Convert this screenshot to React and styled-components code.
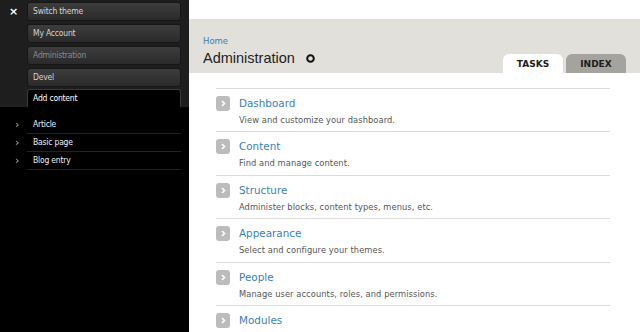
import React from 'react';
import styled, { createGlobalStyle } from 'styled-components';

const GlobalStyle = createGlobalStyle`
    html, body {
        margin: 0;
        padding: 0;
        background: #fff;
        overflow: hidden;
    }
`;

const Page = styled.div`
    display: flex;
    width: 640px;
    height: 332px;
    overflow: hidden;
`;

const Sidebar = styled.aside`
    width: 189px;
    flex-shrink: 0;
    background: #000;
    display: flex;
    flex-direction: column;
    font-family: 'DejaVu Sans Condensed', 'DejaVu Sans', sans-serif;
    font-size: 8.5px;
    letter-spacing: -0.2px;
`;

const SidebarTop = styled.div`
    background: #1e1e1e;
    display: grid;
    grid-template-columns: 27px 154px;
    padding-top: 2px;
`;

const CloseCell = styled.div`
    display: flex;
    justify-content: center;
    padding-top: 3px;
    color: #fff;
    font-family: 'DejaVu Sans', sans-serif;
    font-size: 11px;
    font-weight: bold;
    line-height: 13px;
`;

const ButtonStack = styled.div`
    display: flex;
    flex-direction: column;
    gap: 3px;
`;

const MenuButton = styled.div`
    height: 19px;
    box-sizing: border-box;
    border: 1px solid #161616;
    border-radius: 3px;
    background: linear-gradient(#3d3d3d, #2a2a2a);
    color: ${(p) => (p.$dim ? '#8a8a8a' : '#d4d4d4')};
    padding-left: 5px;
    line-height: 17px;
`;

const ActiveTab = styled.div`
    height: 18px;
    margin-top: -1px;
    box-sizing: border-box;
    border: 1px solid #3a3a3a;
    border-bottom: none;
    border-radius: 3px 3px 0 0;
    background: #000;
    color: #fff;
    padding-left: 5px;
    line-height: 17px;
`;

const SubList = styled.ul`
    list-style: none;
    margin: 0;
    padding: 9px 0 0;
`;

const SubItem = styled.li`
    display: grid;
    grid-template-columns: 27px 154px;
    height: 18px;
    line-height: 17px;
    color: #f0f0f0;
`;

const Chevron = styled.span`
    padding-left: 15px;
    color: #b5b5b5;
    font-family: 'DejaVu Sans', sans-serif;
    font-size: 11px;
`;

const SubLabel = styled.span`
    padding-left: 6px;
    border-bottom: 1px solid #232323;
`;

const Main = styled.main`
    flex: 1;
    padding-top: 19px;
    font-family: 'DejaVu Sans', sans-serif;
`;

const HeaderBand = styled.header`
    height: 54px;
    background: #e1e0da;
    display: flex;
    justify-content: space-between;
    align-items: flex-end;
    padding: 0 14px 0 14px;
`;

const TitleBlock = styled.div`
    padding-bottom: 6px;
`;

const Breadcrumb = styled.a`
    display: block;
    font-size: 8.5px;
    color: #3a7fb3;
    line-height: 12px;
    margin-bottom: 3px;
`;

const Title = styled.h1`
    margin: 0;
    display: flex;
    align-items: center;
    gap: 11px;
    font-family: 'Liberation Sans', sans-serif;
    font-weight: normal;
    font-size: 14.5px;
    line-height: 17px;
    color: #222;
`;

const Tabs = styled.nav`
    display: flex;
    gap: 3px;
`;

const Tab = styled.div`
    width: 60px;
    height: 19px;
    border-radius: 6px 6px 0 0;
    background: ${(p) => (p.$active ? '#fff' : '#a4a39e')};
    color: #1c1c1c;
    font-size: 9px;
    font-weight: bold;
    line-height: 21px;
    text-align: center;
`;

const TaskList = styled.ul`
    list-style: none;
    margin: 15px 0 0 27px;
    padding: 0;
    width: 394px;
`;

const TaskRow = styled.li`
    display: grid;
    grid-template-columns: 23px 1fr;
    border-top: 1px solid #dcdcdc;
    height: 43.4px;
    box-sizing: border-box;
    padding-top: 7px;
`;

const TaskTitle = styled.a`
    display: block;
    color: #3a7fb3;
    font-size: 10.4px;
    line-height: 15px;
`;

const TaskDesc = styled.p`
    margin: 3px 0 0;
    color: #555;
    font-size: 8.3px;
    letter-spacing: 0.08px;
    line-height: 12px;
`;

function ArrowBox() {
    return (
        <svg width="14" height="15" viewBox="0 0 14 15">
            <rect x="0" y="0" width="14" height="15" rx="3" fill="#bcbcbc" />
            <path d="M6 5 L8.5 7.5 L6 10" stroke="#fff" strokeWidth="1.6" fill="none" />
        </svg>
    );
}

function ConfigIcon() {
    return (
        <svg width="9" height="9" viewBox="0 0 9 9">
            <circle cx="4.5" cy="4.5" r="3.3" stroke="#111" strokeWidth="2" fill="none" />
        </svg>
    );
}

const tasks = [
    { title: 'Dashboard', desc: 'View and customize your dashboard.' },
    { title: 'Content', desc: 'Find and manage content.' },
    { title: 'Structure', desc: 'Administer blocks, content types, menus, etc.' },
    { title: 'Appearance', desc: 'Select and configure your themes.' },
    { title: 'People', desc: 'Manage user accounts, roles, and permissions.' },
    { title: 'Modules' },
];

export default function App() {
    return (
        <>
            <GlobalStyle />
            <Page>
                <Sidebar>
                    <SidebarTop>
                        <CloseCell>×</CloseCell>
                        <ButtonStack>
                            <MenuButton>Switch theme</MenuButton>
                            <MenuButton>My Account</MenuButton>
                            <MenuButton $dim>Administration</MenuButton>
                            <MenuButton>Devel</MenuButton>
                            <ActiveTab>Add content</ActiveTab>
                        </ButtonStack>
                    </SidebarTop>
                    <SubList>
                        {['Article', 'Basic page', 'Blog entry'].map((item) => (
                            <SubItem key={item}>
                                <Chevron>›</Chevron>
                                <SubLabel>{item}</SubLabel>
                            </SubItem>
                        ))}
                    </SubList>
                </Sidebar>
                <Main>
                    <HeaderBand>
                        <TitleBlock>
                            <Breadcrumb>Home</Breadcrumb>
                            <Title>
                                Administration <ConfigIcon />
                            </Title>
                        </TitleBlock>
                        <Tabs>
                            <Tab $active>TASKS</Tab>
                            <Tab>INDEX</Tab>
                        </Tabs>
                    </HeaderBand>
                    <TaskList>
                        {tasks.map((t) => (
                            <TaskRow key={t.title}>
                                <ArrowBox />
                                <div>
                                    <TaskTitle>{t.title}</TaskTitle>
                                    {t.desc && <TaskDesc>{t.desc}</TaskDesc>}
                                </div>
                            </TaskRow>
                        ))}
                    </TaskList>
                </Main>
            </Page>
        </>
    );
}
